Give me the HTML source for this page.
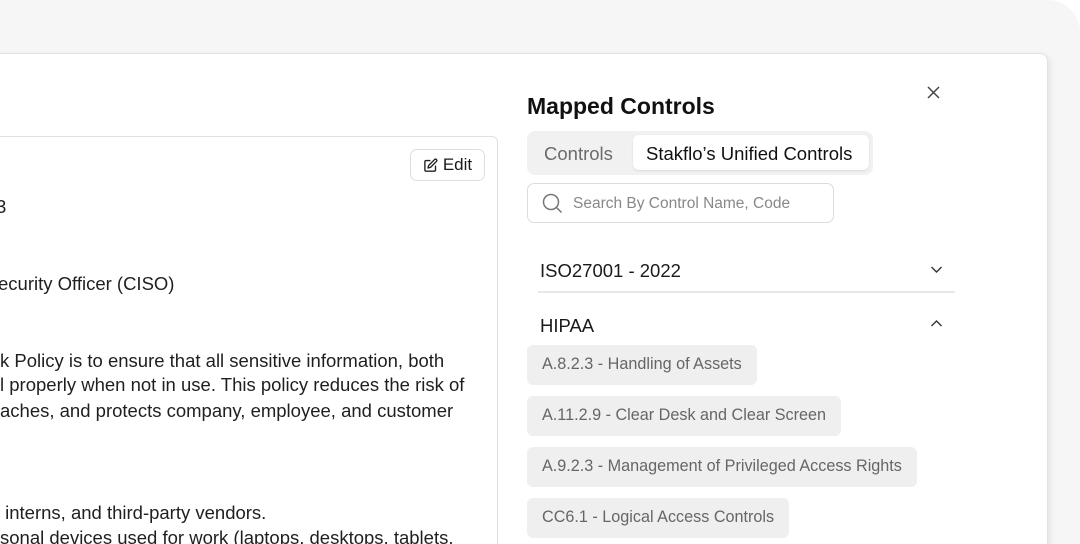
<!DOCTYPE html>
<html><head><style>
*{box-sizing:border-box;margin:0;padding:0}
html,body{width:1080px;height:544px;overflow:hidden}
body{position:relative;background:#fff;font-family:"Liberation Sans",sans-serif;color:#1a1a1a}
.bg{position:absolute;left:0;top:0;width:1080px;height:544px;background:#f6f6f6;border-top-right-radius:32px}
.panel{position:absolute;left:-10px;top:53px;width:1058px;height:500px;background:#fff;border:1px solid #e2e2e2;border-radius:8px;box-shadow:2px 2px 6px rgba(0,0,0,.08)}
.card{position:absolute;left:-10px;top:136px;width:508px;height:420px;border:1px solid #e0e0e0;border-radius:6px;background:#fff}
.edit{position:absolute;left:410px;top:149px;width:75px;height:32px;border:1px solid #dedede;border-radius:7px;font-size:17px;display:flex;align-items:center;justify-content:center;gap:5px}
.t{position:absolute;font-size:18.5px;white-space:nowrap;color:#1f1f1f}
h1{position:absolute;left:527px;top:93px;font-size:23px;font-weight:bold;color:#111}
.tabs{position:absolute;left:527px;top:131px;width:346px;height:44px;background:#f1f1f1;border-radius:8px}
.tab1{position:absolute;left:17px;top:12px;font-size:18.5px;color:#6b6b6b}
.tab2{position:absolute;left:106px;top:4px;width:236px;height:35px;background:#fff;border-radius:6px;box-shadow:0 1px 2px rgba(0,0,0,.1);font-size:18.5px;padding:8px 0 0 13px;color:#111}
.search{position:absolute;left:527px;top:183px;width:307px;height:40px;border:1px solid #dcdcdc;border-radius:7px;font-size:15.5px;color:#888;padding:11px 0 0 45px}
.sec{position:absolute;left:540px;font-size:18.5px;color:#1a1a1a}
.line{position:absolute;left:538px;top:291px;width:417px;height:2px;background:#e8e8e8}
.chip{position:absolute;left:527px;height:40px;background:#efefef;border-radius:6px;font-size:16.2px;color:#666;padding:10px 15px 0 15px;white-space:nowrap}
</style></head><body>
<div class="bg"></div>
<div class="panel"></div>
<div class="card"></div>
<div class="edit"><svg width="15" height="15" viewBox="0 0 24 24" fill="none" stroke="#222" stroke-width="2.2" stroke-linecap="round" stroke-linejoin="round"><path d="M11 4H5a2 2 0 0 0-2 2v13a2 2 0 0 0 2 2h13a2 2 0 0 0 2-2v-6"/><path d="M18.5 2.5a2.1 2.1 0 0 1 3 3L12 15l-4 1 1-4z"/></svg>Edit</div>
<div class="t" style="left:-4px;top:196px">3</div>
<div class="t" style="left:-2px;top:273px">ecurity Officer (CISO)</div>
<div class="t" style="left:0;top:350px">k Policy is to ensure that all sensitive information, both</div>
<div class="t" style="left:0;top:374px">l properly when not in use. This policy reduces the risk of</div>
<div class="t" style="left:0;top:400px">aches, and protects company, employee, and customer</div>
<div class="t" style="left:0;top:502px">&nbsp;interns, and third-party vendors.</div>
<div class="t" style="left:0;top:527px">sonal devices used for work (laptops, desktops, tablets,</div>
<h1>Mapped Controls</h1>
<svg style="position:absolute;left:926px;top:85px" width="15" height="15" viewBox="0 0 15 15" stroke="#444" stroke-width="1.5"><path d="M2 2L13 13M13 2L2 13"/></svg>
<div class="tabs"><div class="tab1">Controls</div><div class="tab2">Stakflo’s Unified Controls</div></div>
<div class="search">Search By Control Name, Code</div>
<svg style="position:absolute;left:542px;top:193px" width="21" height="21" viewBox="0 0 21 21" fill="none" stroke="#777" stroke-width="1.5"><circle cx="9" cy="9" r="7.5"/><path d="M14.5 14.5L19.5 19.5"/></svg>
<div class="sec" style="top:260px">ISO27001 - 2022</div>
<svg style="position:absolute;left:930px;top:265px" width="13" height="9" viewBox="0 0 13 9" fill="none" stroke="#333" stroke-width="1.4"><path d="M1.5 2l5 5 5-5"/></svg>
<div class="line"></div>
<div class="sec" style="top:315px">HIPAA</div>
<svg style="position:absolute;left:930px;top:319px" width="13" height="9" viewBox="0 0 13 9" fill="none" stroke="#333" stroke-width="1.4"><path d="M1.5 7l5-5 5 5"/></svg>
<div class="chip" style="top:345px">A.8.2.3 - Handling of Assets</div>
<div class="chip" style="top:396px">A.11.2.9 - Clear Desk and Clear Screen</div>
<div class="chip" style="top:447px">A.9.2.3 - Management of Privileged Access Rights</div>
<div class="chip" style="top:498px">CC6.1 - Logical Access Controls</div>
</body></html>
